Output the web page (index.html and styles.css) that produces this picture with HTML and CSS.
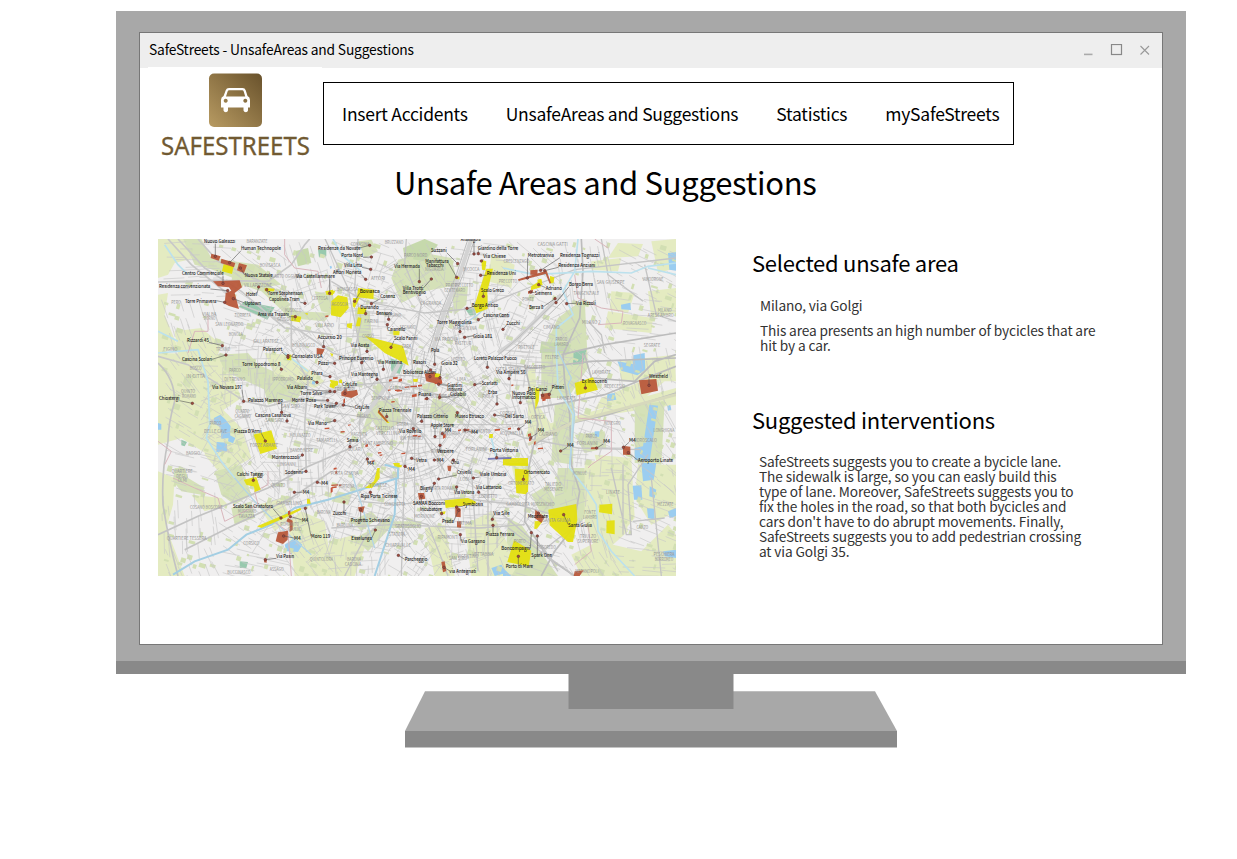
FILE: index.html
```html
<!DOCTYPE html>
<html lang="en">
<head>
<meta charset="utf-8">
<title>SafeStreets - UnsafeAreas and Suggestions</title>
<link rel="stylesheet" href="styles.css">
</head>
<body>
<div class="monitor">
  <div class="window">
    <div class="titlebar">
      <span class="window-title"><span>SafeStreets - UnsafeAreas and Suggestions</span></span>
      <svg class="controls" width="66" height="12" viewBox="0 0 66 12">
        <path d="M0 10.400H8.500" stroke="#aaa" stroke-width="1.6"/>
        <rect x="27.500" y=".5" width="10" height="10" fill="none" stroke="#888" stroke-width="1.2"/>
        <path d="M56.500 2l8.500 8.500M65 2l-8.500 8.500" stroke="#999" stroke-width="1.1"/>
      </svg>
    </div>
    <header class="header">
      <svg class="logo" width="174" height="97" viewBox="148 67 174 97">
        <defs><linearGradient id="gold" x1="0" y1="1" x2="1" y2="0"><stop offset="0" stop-color="#b89b62"/><stop offset="1" stop-color="#69522c"/></linearGradient></defs>
        <rect x="209" y="73.500" width="53" height="53.500" rx="5" fill="url(#gold)"/>
        <path fill="#fff" fill-rule="evenodd" d="M229 88H242.500Q245 88 245.700 90.200L247.500 96Q250 97 250 100V107.500H248V110.500Q247.600 112.300 245.800 112.300T243.500 110.500V107.500H228V110.500Q227.600 112.300 225.800 112.300T223.500 110.500V107.500H221V100Q221 97 223.600 96L225.700 90.200Q226.500 88 229 88ZM229.200 90.200Q228 90.200 227.600 91.500L226 96.500H245.200L243.700 91.500Q243.300 90.200 242.200 90.200ZM225.700 98.800a2 2 0 1 0 .01 0ZM245.300 98.800a2 2 0 1 0 .01 0Z"/>
        <text class="brand" x="161" y="155.300" textLength="149" lengthAdjust="spacingAndGlyphs">SAFESTREETS</text>
      </svg>
      <nav class="nav">
        <a>Insert Accidents</a><a>UnsafeAreas and Suggestions</a><a>Statistics</a><a>mySafeStreets</a>
      </nav>
    </header>
    <h1 class="page-title"><span>Unsafe Areas and Suggestions</span></h1>
    <main class="main">
      <svg class="map" id="map" width="518" height="337" viewBox="0 3 1554 1011"></svg>
      <section class="details">
        <h2 class="heading">Selected unsafe area</h2>
        <p class="place">Milano, via Golgi</p>
        <p class="reason">This area presents an high number of bycicles that are<br>hit by a car.</p>
        <h2 class="heading second">Suggested interventions</h2>
        <p class="advice">SafeStreets suggests you to create a bycicle lane.<br>The sidewalk is large, so you can easly build this<br>type of lane. Moreover, SafeStreets suggests you to<br>fix the holes in the road, so that both bycicles and<br>cars don't have to do abrupt movements. Finally,<br>SafeStreets suggests you to add pedestrian crossing<br>at via Golgi 35.</p>
      </section>
    </main>
  </div>
</div>
<svg class="stand" width="492" height="74" viewBox="0 0 492 74">
  <path d="M20 17.300H470L492 57H0Z" fill="#a8a8a8"/>
  <path d="M0 57H492V73.500H0ZM163.500 0H328.500V35H163.500Z" fill="#898989"/>
</svg>
<script src="map.js"></script>
</body>
</html>
```
FILE: styles.css
```css
body {
  margin: 0;
  background: #fff;
  color: #000;
  font-family: "Noto Sans CJK SC", "Noto Sans", sans-serif;
  overflow: hidden;
}
.monitor {
  box-sizing: border-box;
  width: 1070px;
  height: 663px;
  margin: 11px 0 0 116px;
  padding: 21px 23px 0;
  background: #a8a8a8;
  border-bottom: 13px solid #898989;
}
.window {
  box-sizing: border-box;
  height: 613px;
  border: 1px solid #777;
  background: #fff;
}
.titlebar {
  display: flex;
  align-items: center;
  justify-content: space-between;
  height: 35px;
  padding: 0 12px 0 9px;
  background: #eee;
}
.controls { margin-bottom: 2px; }
.window-title { font-size: 13.800px; letter-spacing: -.18px; line-height: 33px; height: 35px; }
.header { display: flex; height: 92px; padding-left: 8px; }
.logo { margin-top: -1px; background: #fff; flex: none; }
.brand { font-family: "Noto Sans", sans-serif; font-size: 24.500px; fill: #715a32; stroke: #715a32; stroke-width: .3px; }
.nav {
  box-sizing: border-box;
  display: flex;
  gap: 38px;
  width: 691px;
  height: 63px;
  margin: 14px 0 0 1px;
  padding-left: 18px;
  border: 1.300px solid #000;
  font-size: 17.500px;
  letter-spacing: -.25px;
  line-height: 61px;
  white-space: nowrap;
}
.page-title { margin: 0; padding: 2px 0 0 254px; font-size: 31px; letter-spacing: -.3px; font-weight: 400; line-height: 40px; }
.main { display: flex; margin: 37px 0 0 18px; }
.map { flex: none; background: #f0efef; font-family: "Noto Sans CJK SC", "Noto Sans", sans-serif; }
.details { margin-left: 76px; padding-top: 8px; white-space: nowrap; color: #333; font-size: 13.700px; letter-spacing: -.13px; line-height: 15px; }
.heading { margin: 0; color: #000; font-size: 22px; letter-spacing: -.26px; font-weight: 400; line-height: 30px; }
.place { margin: 21px 0 0 8px; }
.reason { margin: 10px 0 0 8px; }
.second { margin-top: 51px; }
.advice { margin: 20px 0 0 7px; }
.stand { display: block; margin-left: 405px; }
.district { fill: #949494; font-size: 14.500px; }
.place-name { fill: #222; stroke: #222; stroke-width: .25px; font-size: 16px; }
```
FILE: map.js
```js
const map = document.getElementById('map');
const NS = 'http://www.w3.org/2000/svg';

function add(parent, tag, attrs, text) {
  const el = document.createElementNS(NS, tag);
  for (const k in attrs) el.setAttribute(k, attrs[k]);
  if (text) el.textContent = text;
  parent.appendChild(el);
  return el;
}

// Land cover: pale fields, parks, woods and water.
const FIELD = '#e4ebc1', PARK = '#d5e1b8', WOOD = '#c6d9ac', TEAL = '#98c9ae', WATER = '#9bcdf0';
const land = [
  [FIELD, '0,3 75,3 110,60 50,75 30,110 0,120'], [PARK, '75,3 130,3 160,60 300,80 370,140 300,150 150,90 110,80'],
  [FIELD, '0,170 30,165 20,230 60,330 0,345'], [FIELD, '50,280 130,270 190,320 170,380 60,350'],
  [FIELD, '0,345 200,350 250,480 160,540 150,650 70,600 0,620'], [FIELD, '105,420 150,430 140,480 90,470'],
  [PARK, '180,350 270,345 300,380 440,440 410,500 310,450 200,400'], [FIELD, '320,345 390,350 500,430 470,450 350,410'],
  [PARK, '80,415 105,420 95,450 75,440'], [PARK, '145,510 210,530 250,600 230,650 150,655'],
  [FIELD, '0,700 50,720 45,800 25,870 80,1014 0,1014'],
  [FIELD, '150,530 180,500 250,570 280,660 190,710 140,650'], [PARK, '310,420 390,440 380,480 330,500'],
  [PARK, '230,80 330,140 400,200 375,220 310,160 220,130'], [PARK, '350,190 420,220 520,225 500,250 390,240'],
  [PARK, '470,160 525,170 535,230 490,220'], [WOOD, '410,40 450,30 460,75 420,85'],
  [PARK, '720,65 800,45 880,60 900,140 800,160 730,195 700,120'], [WOOD, '735,30 800,3 840,20 800,70 740,60'],
  [PARK, '880,150 930,145 925,200 890,230'], [PARK, '600,10 640,5 660,40 620,60'],
  [PARK, '590,210 635,220 645,340 600,320'], [FIELD, '1000,50 1070,80 1060,150 990,130'],
  [FIELD, '1380,15 1455,18 1440,55 1350,60'], [FIELD, '1300,70 1390,60 1380,100 1300,95'],
  [FIELD, '1360,160 1430,165 1410,225 1355,215'], [FIELD, '1470,160 1554,150 1554,225 1480,240'],
  [FIELD, '1350,220 1485,240 1480,285 1340,270'], [FIELD, '1480,10 1554,3 1554,90 1500,105'],
  [PARK, '1200,240 1280,180 1290,390 1230,480 1150,480 1150,350'], [WOOD, '1150,310 1240,320 1230,345 1145,345'],
  [FIELD, '1380,370 1550,350 1554,430 1390,430'], [FIELD, '1130,570 1250,535 1554,450 1554,500 1280,540 1130,615'],
  [FIELD, '1110,400 1130,380 1140,500 1180,560 1110,600'], [PARK, '1190,500 1250,490 1245,680 1180,670'],
  [PARK, '1250,590 1340,580 1345,630 1280,645'], [FIELD, '1330,480 1450,430 1520,430 1460,480 1310,515'],
  [PARK, '1430,500 1520,490 1510,680 1430,675'], [FIELD, '1310,650 1420,660 1430,840 1380,900 1340,770'],
  [FIELD, '1440,680 1554,680 1554,820 1480,860 1430,780'], [PARK, '1200,690 1280,690 1290,830 1230,890 1180,860'],
  [FIELD, '1280,670 1370,670 1410,880 1320,960 1280,850'], [FIELD, '1320,910 1450,940 1530,860 1554,890 1554,1014 1270,1014 1240,950'],
  [PARK, '1050,840 1090,860 1200,1014 1040,1014'], [FIELD, '920,860 1000,820 1080,980 1060,1014 940,1014'],
  [PARK, '660,490 720,480 730,550 670,590 640,540'], [PARK, '825,480 880,500 910,530 880,560 810,540'],
  [PARK, '610,590 660,430 680,450 630,580'], [PARK, '790,440 830,430 840,460 800,470'],
  [FIELD, '390,850 430,820 500,850 525,1014 410,1014'], [FIELD, '515,910 590,890 620,930 590,1014 500,1014'],
  [PARK, '590,900 650,870 700,830 710,855 630,940'], [FIELD, '300,800 370,780 400,840 350,880'],
  [PARK, '50,690 80,690 90,720 140,750 130,770 70,760 45,730'], [PARK, '170,700 250,680 280,770 230,800 190,770'],
  [PARK, '220,810 280,790 290,840 230,860'], [FIELD, '100,770 190,780 210,800 140,820'],
  [PARK, '580,850 640,820 660,840 610,880'], [PARK, '690,850 790,850 790,870 690,870'],
  [FIELD, '800,870 860,860 890,1014 830,1014'], [PARK, '540,760 580,770 570,800 520,790'],
  [FIELD, '1060,680 1110,670 1120,720 1080,770'], [PARK, '1120,770 1170,740 1210,820 1150,830'],
  [TEAL, '260,190 350,208 328,245 242,206'], [TEAL, '697,360 737,376 725,408 700,400'], [TEAL, '922,214 950,206 954,230 936,233'],
  [TEAL, '1247,340 1285,336 1276,378 1245,380'], [TEAL, '480,35 505,35 505,55 483,58'], [TEAL, '70,605 87,612 80,625 70,622'],
  [TEAL, '245,970 270,972 265,990 245,990'],
  [WATER, '168,540 187,530 203,545 218,565 216,600 190,602 187,568 167,555'], [WATER, '176,612 207,614 207,640 175,642'],
  [WATER, '213,590 232,600 225,616 210,610'], [WATER, '380,920 410,900 433,920 420,942 385,940'],
  [WATER, '0,555 10,558 10,575 0,575'], [WATER, '1389,200 1417,194 1419,216 1390,214'],
  [WATER, '1378,370 1425,378 1426,352 1460,345 1462,395 1438,412 1390,398'], [WATER, '1348,468 1370,465 1375,485 1347,490'],
  [WATER, '1474,500 1500,503 1475,670 1430,665 1430,630 1455,625'], [WATER, '1450,675 1495,675 1487,725 1455,730'],
  [WATER, '1424,743 1450,742 1453,785 1428,785'], [WATER, '1475,745 1495,755 1490,780 1474,775'],
  [WATER, '1467,810 1488,812 1490,845 1470,840'], [WATER, '1530,45 1554,43 1554,98 1534,95'],
  [WATER, '1530,820 1554,810 1554,835 1535,840'], [WATER, '1000,990 1030,980 1045,1005 1010,1014'],
  [WATER, '1515,940 1554,935 1554,960 1520,955'], [WATER, '1310,580 1325,580 1323,597 1310,595'],
  [WATER, '1035,990 1060,1014 1035,1014'], [WATER, '1528,505 1537,500 1540,515 1530,518'],
  [WATER, '515,85 520,83 522,90 517,93'], [WATER, '462,430 472,430 470,440 462,438']
];
const landLayer = add(map, 'g', {});
land.forEach(([fill, points]) => add(landLayer, 'polygon', { fill, points }));

// Side streets: short, locally aligned segments, denser towards the centre.
let seed = 7;
const rnd = () => (seed = (seed * 16807) % 2147483647) / 2147483647;
let thin = '', green = '';
for (let gy = 10; gy < 1014; gy += 34) {
  for (let gx = 10; gx < 1554; gx += 34) {
    const d = Math.hypot((gx - 740) / 620, (gy - 510) / 480);
    const n = d < .45 ? 4 : d < .8 ? 3 : d < 1 ? 2 : 1;
    const bx = Math.floor(gx / 170), by = Math.floor(gy / 150);
    const base = ((bx * 37 + by * 71) % 90) * Math.PI / 180;
    for (let i = 0; i < n; i++) {
      const a = base + (i % 2 ? Math.PI / 2 : 0) + (rnd() - .5) * .15;
      const l = 20 + rnd() * 50;
      const x = gx + rnd() * 30, y = gy + rnd() * 30;
      thin += `M${x.toFixed(1)} ${y.toFixed(1)}l${(Math.cos(a) * l).toFixed(1)} ${(Math.sin(a) * l).toFixed(1)}`;
    }
    if (rnd() < .4) {
      const x = gx + rnd() * 30, y = gy + rnd() * 30, w = 6 + rnd() * 14, h = 5 + rnd() * 12;
      green += `M${x.toFixed(1)} ${y.toFixed(1)}l${w.toFixed(1)} ${(w * .3).toFixed(1)}l${(-h * .3).toFixed(1)} ${h.toFixed(1)}l${(-w).toFixed(1)} ${(-w * .3).toFixed(1)}z`;
    }
  }
}
add(map, 'path', { d: green, fill: '#d2dfb3' });
add(map, 'path', { d: thin, stroke: '#c8c8c8', 'stroke-width': 1.9, fill: 'none' });

// Main roads, railways, canals and the municipal boundary.
const lines = [
  ['#c8c8c8', 5, 'M0 132L170 127 330 130 400 80 440 20 455 3M30 3L100 80 250 200 390 255 525 345 600 370M0 355L90 380 260 490 330 505 430 480 525 495M120 3L180 70 330 140 400 190 400 330 450 430 440 560 445 700M60 3L140 90 250 160 380 270 520 290'],
  ['#c3c3c3', 5, 'M0 375Q50 420 50 490Q30 560 30 610Q10 700 15 800Q30 900 60 1014M0 890L120 835 330 750 440 690 600 620M80 935L210 870 400 780 520 700'],
  ['#d3d3d3', 12, 'M940 3L905 110 860 220 820 345M1210 170L1070 310 1020 345M600 560L690 440 740 345'],
  ['#bdbdbd', 3, 'M930 3L895 110 850 220 810 345M950 3L915 110 870 220 830 345M1220 165L1080 300 1010 360M1235 170L1090 310 1020 370'],
  ['#c5c5c5', 4, 'M500 0L570 150 600 300 620 440 700 500 780 570 860 700M600 3L590 150 610 250 570 420M520 130L620 190 800 225 960 210 1110 150 1250 95 1554 60M745 3L740 80 790 200 760 345 770 500 740 680 730 1014M500 470L600 440 720 430 870 480 1000 560 1100 600 1260 630 1450 635M560 1014L620 900 690 830 810 860 850 960 870 1014M520 870L700 860 960 870 1100 860M600 790L720 800 900 780 1080 800 1220 840'],
  ['#bcbcbc', 5, 'M1270 3L1275 100 1265 240 1215 350 1220 430 1235 530 1240 680 1265 760 1245 870 1190 940 1150 1014M1130 620L1220 560 1350 530 1554 465M1100 380L1140 560 1110 700 1100 850 1170 960 1250 1014M1130 510L1240 490 1340 470 1440 430 1554 385M1280 350L1300 420 1430 430 1490 370 1554 350M1035 380L1130 390 1300 370 1554 360M1210 350L1340 320 1554 285'],
  ['#d7d9bd', 9, 'M1110 620L1250 550 1554 470'],
  ['#c4c4c4', 4, 'M1360 690L1405 890 1420 890 1410 740 1470 650M1395 680V890M1425 850L1520 840M1290 250L1330 290 1340 345M1330 3L1350 110 1455 190M1460 80L1495 230 1554 250M1480 720L1510 1014M1140 950L1190 910 1270 850M1150 920L1200 1000M1050 870L1250 1014M1035 830L1150 930M990 700L990 1014M940 690L960 1000'],
  ['#bbb', 2.500, 'M650 430Q750 390 860 440T920 590Q870 700 760 720T610 620Q590 500 650 430M690 480Q770 440 835 500T850 620Q780 670 710 630T690 480M770 560L500 520M770 560L560 820M770 560L770 850M770 560L1000 800M770 560L1080 560M770 560L1000 410M770 560L800 340M770 560L620 370'],
  ['#bce1ed', 5, 'M20 20L60 80 90 110M0 280L60 310M380 345L450 400M0 345L120 335 150 430 155 560 145 600 190 670 230 720M525 3L550 50 610 100M1035 90L1130 110 1300 100 1420 105 1470 85 1554 75M1260 3L1250 100 1215 160 1245 230 1195 270 1195 345 1200 450 1245 530 1240 620 1235 690 1290 760 1315 800 1320 880 1360 940 1430 1014M1470 90L1554 110M1015 660L1000 600'],
  ['#a3cee3', 6, 'M45 1010L110 970 210 935 265 890 340 860 410 810 510 785 640 745 720 720 720 690 680 680M715 720L710 830 650 1014'],
  ['#b4d4e4', 4, 'M230 720L290 790 370 870 460 950M1200 340L1240 420 1230 440 1250 530 1235 680M900 270L960 230 1000 190M580 700L650 930'],
  ['#d9b6bc', 3, 'M380 3V50L410 90 480 100 490 150M150 230V280H110L90 345M0 610L40 640 20 680M45 720L110 750 180 780 200 850 300 800 290 760 330 740 330 700M345 850L390 880 400 1014M1250 110L1260 180 1330 210 1395 220 1390 255 1320 260M1275 345L1260 540 1360 550 1360 640 1300 680 1290 690M1310 3L1350 30M1250 980L1300 940 1290 860']
];
lines.forEach(([stroke, w, d]) => add(map, 'path', { d, stroke, 'stroke-width': w, fill: 'none' }));

// Selected transformation areas.
const Y = '#e4df10', R = '#b8583b';
const zones = [
  [Y, '197,78 227,85 222,108 192,100'], [R, '160,47 188,55 182,68 158,60'], [R, '190,62 232,75 228,88 188,75'], [R, '243,75 267,82 258,105 237,97'],
  [R, '165,130 245,127 252,148 230,165 243,213 213,204 200,197 203,165 220,158 213,148 180,145'],
  [Y, '400,232 430,236 426,253 398,248'], [Y, '320,150 350,152 348,160 320,160'], [Y, '502,160 525,155 525,172 505,170'],
  [Y, '520,190 540,172 568,178 572,210 548,238 519,232'], [Y, '600,150 648,155 646,183 597,178'], [Y, '585,180 605,180 590,210 584,205'],
  [Y, '600,208 625,210 623,228 598,228'], [Y, '600,238 610,240 606,265 593,265'], [Y, '567,257 583,255 581,272 567,268'],
  [Y, '620,293 735,324 752,383 720,365 680,345'], [Y, '706,278 725,280 724,292 706,292'], [Y, '515,158 532,158 528,167 515,170'],
  [Y, '970,65 985,70 982,97 972,95'], [Y, '985,92 1005,92 988,160 989,212 955,226 948,206'], [Y, '893,116 904,116 904,124 892,123'],
  [Y, '1138,125 1150,122 1154,142 1140,140'], [Y, '1176,114 1189,118 1187,134 1176,136'],
  [Y, '1120,145 1150,125 1148,148 1118,157'], [R, '1117,97 1139,95 1138,111 1117,110'], [R, '1080,124 1160,100 1166,98 1179,135 1175,137 1163,108 1082,129'],
  [R, '1110,160 1125,155 1124,165 1110,167'],
  [Y, '287,590 340,577 357,632 307,648'], [Y, '516,435 525,440 530,452 515,447'], [Y, '515,425 540,430 540,440 525,450'],
  [R, '550,463 565,450 568,460 597,455 600,470 580,480 550,473'], [Y, '660,515 695,555 688,555 660,525'], [R, '662,517 690,550 687,553 659,523'],
  [R, '800,407 830,402 845,420 840,438 805,430'], [Y, '832,405 848,408 845,418 830,418'], [R, '840,423 850,422 853,435 845,440'],
  [Y, '765,423 780,422 778,432 766,431'], [Y, '994,588 1005,588 1004,600 993,600'], [Y, '1035,660 1110,660 1110,684 1035,682'],
  [Y, '1250,435 1305,418 1320,455 1256,472'], [R, '1443,427 1495,423 1500,458 1450,469'], [Y, '1130,450 1145,452 1142,490 1132,515 1132,480'],
  [R, '1148,468 1174,464 1178,482 1150,484'], [R, '1395,623 1417,626 1417,651 1395,650'], [R, '1300,628 1315,628 1315,634 1298,634'],
  [Y, '257,725 295,717 308,755 290,762 288,746 265,740'], [Y, '297,865 427,810 430,815 380,840 310,870'], [Y, '447,782 455,783 458,797 447,797'],
  [R, '360,883 390,878 389,905 375,918 353,910'], [R, '390,840 404,848 404,875 395,882 395,855 385,850'], [R, '319,963 326,963 326,974 318,973'],
  [Y, '658,690 665,690 665,720 642,750 620,750 648,730'], [Y, '860,787 930,780 955,792 950,799 863,810'], [R, '780,765 798,765 802,782 783,785'],
  [R, '892,805 908,812 908,838 892,836'], [R, '897,850 910,850 909,869 897,868'], [Y, '845,822 863,820 860,829 846,827'],
  [R, '600,808 620,805 615,824 603,820'], [R, '850,972 860,970 865,999 855,1003'], [R, '868,683 880,683 878,700 870,698'],
  [Y, '1070,692 1112,695 1110,760 1103,769 1075,765'], [Y, '1045,675 1110,675 1110,682 1045,682'],
  [Y, '1171,815 1255,798 1258,845 1245,912 1230,912 1175,862'], [Y, '1325,800 1363,797 1362,829 1323,823'], [Y, '1346,848 1370,847 1370,889 1345,885'],
  [Y, '1130,850 1155,848 1137,872 1129,873'], [R, '1132,815 1160,837 1150,855 1130,840'], [Y, '1068,907 1120,938 1112,985 1048,972'],
  [R, '1250,1000 1277,997 1265,1014 1247,1014'], [Y, '718,680 732,682 730,688 718,688'], [Y, '705,675 725,675 725,687 710,685'],
  [R, '476,330 500,334 492,350 476,348'], [Y, '388,350 400,350 400,367 387,366'], [Y, '440,225 450,226 448,232'],
  [Y, '516,345 526,348 522,357'], [Y, '544,425 552,425 552,436 542,434'], ['#7475af', '990,660 1060,657 1060,663 990,665']
];
zones.forEach(([fill, points]) => add(map, 'polygon', { fill, points, 'fill-opacity': .95 }));
let scraps = '';
[[705,418,14,6],[722,424,10,8],[693,425,8,6],[740,446,14,4],[757,444,20,4],[780,441,12,5],[716,457,16,4],[690,455,8,4],[762,470,14,8],[830,433,10,6],[842,470,5,16],[764,592,14,5],[780,594,8,4],[660,643,10,4],[665,650,8,4],[711,455,14,4],[622,620,8,8],[855,590,8,12],[920,574,14,6],[1010,574,16,5],[840,430,12,9],[1110,588,9,8],[1113,602,7,8],[1128,612,5,9],[1140,630,15,4],[1060,440,6,5],[1153,482,10,8],[502,233,9,5],[640,668,10,4],[518,750,6,16],[524,746,12,5],[390,820,7,12],[1050,570,9,5],[730,645,12,4],[800,480,8,6],[548,580,12,4],[556,485,5,13],[570,560,8,3],[500,570,14,4],[655,620,10,5],[700,490,10,4],[900,575,9,5],[520,740,20,4],[527,690,9,5],[532,700,5,9],[543,740,7,5]]
  .forEach(([x, y, w, h]) => { scraps += `M${x} ${y}l${w} ${-h * .3}v${h}l${-w} ${h * .3}z`; });
add(map, 'path', { d: scraps, fill: '#c4563c' });

// District names: text, centre x, baseline y.
const districts = `BARANZATE,297,14|BOVISASCA,336,87|QUARTO OGGIARO,382,119|VILLAPIZZONE,300,147|CERTOSA,485,187|MUSOCCO,405,222|PERO,54,198|VIALBA,154,234|DORNO,155,247|TORREFA,254,236|SAN LEONARDO,214,263|BONOLA,233,293|GALLARATESE,324,316|TRENNO,195,340|FIGINO,37,340|BOLDINASCO,437,328|GHISOLFA,386,250|VILLARIO,500,266|BOSCO,113,396|IN CITTÀ,113,420|PARCO,231,403|DI TRENNO,230,428|QUINTO,90,464|ROMANO,93,479|QUARTO,253,526|CAGNINO,254,540|IPPODROMO,375,430|SAN SIRO,398,510|PARCO,172,562|DELLE CAVE,173,585|FORZE ARMATE,318,628|MOLINAZZO,426,598|BAGGIO,105,651|BANDE NERE,430,642|TAMARELLI,506,612|SAN SIRO,350,552|QUARTIERE,72,705|DEGLI,72,719|OLMI,73,733|COSANO BOSCONE,145,812|QUARTIERE TESSERA,86,907|CORSICO,280,922|MUGGIANO,267,825|TAVAZZA,266,839|GIAMBELLINO,393,800|ROMANITO,395,865|GIULIO,410,880|QUINTO,361,746|BARONA,497,827|BUCCINASCO,243,1008|ASSAGO,356,998|QUINTOLORA,490,969|INGANNI,390,685|
COMASINA,606,24|BRUZZANO,708,17|PARCO NORD,773,57|NIGUARDA,829,98|BICOCCA,940,98|PRECOTTO,918,148|BOVISASCA,568,159|AGOSCIA,545,205|AFFORI,660,126|CA GRANDA,818,200|PRATO,880,147|CENTENARO,890,163|DERGANO,705,238|TURRO,1035,240|MAGGIOLINA,920,275|SEGNANO,750,272|PASTEUR,915,320|FARINI,640,255|VIA PADOVA,865,310|ZARA,745,330|CORSO,630,300|SEMPIONE,668,487|GARIBALDI,725,455|PAGANO,617,540|BRERA,733,563|CASTELLO,680,576|VIA TORINO,760,605|MAGENTA,602,595|VERCELLINA,690,592|AMENDOLA,535,506|BUENOS AIRES,860,480|PIOLA,990,480|LIMA,910,430|LORETO,900,370|RISORGIMENTO,955,585|TRE TORRI,560,460|CONCORDIA,875,590|SANT AMBROGIO,660,620|FORLANINI,955,640|ROMANA,840,645|SOLARI,590,640|PORTA ROMANA,855,755|LODI,920,730|TORTONA,565,750|TICINESE,660,748|PORTA GENOVA,560,710|MORIVIONE,800,840|CORVETTO,990,780|VIGENTINO,930,960|SAN SIRO,900,965|STADERA,717,895|CONCHETTA,710,805|CHIARAVALLE,720,928|BAROUNA,560,868|BARONA,588,970|CASCINA,585,985|RIPAMONTI,870,903|GRATOSOGLIO,750,870|FATIMA,920,860|VETTABBIA,975,955|
CASCINA GATTI,1184,25|CRESCENZAGO,1075,75|PRECOTTO,1050,135|PONTE,1110,190|SAN GIUSEPPE,1358,138|TANGENZIALE,1285,172|VIMODRONE,1485,128|MILANO 2,1300,258|ROVAGNASCO,1430,260|MILANO,1520,221|ARESE AMBRO,1508,237|SEGRATE,1482,326|CIMIANO,1180,274|ROTTOLE,1105,334|PARCO,1210,309|LAMBRO,1210,323|FELTRE,1182,362|CASORETTO,1130,393|LAMBRATE,1330,407|REDECESIO,1370,450|ORTICA,1140,542|CITTÀ STUDI,1050,400|ACQUABELLA,1060,590|CAVRIANO,1170,595|PARCO,1300,600|FORLANINI,1288,622|NOVEGRO,1363,562|IDROSCALO,1465,612|LONGHIGNA,1518,582|LAMBRATE,1225,485|CORSICA,1050,530|MONLUÈ,1265,712|ORTOMERCATO,1089,741|TALIEDO,1185,744|MECENATE,1187,758|MORSENCHIO,1154,804|SANTA GIULIA,1195,853|LINATE,1365,767|CANZO,1453,874|MEZZATE,1522,805|FONTE,1296,828|LAMBRO,1296,842|TRIULZO,1290,900|SUPERIORE,1290,914|ROGOREDO,1165,933|METANOPOLI,1287,1005|PESCHIERA,1518,955|BORROMEO,1518,969|GAMBOLOITA,1080,804|PORTO,1085,915`;
const districtLayer = add(map, 'g', { class: 'district', 'text-anchor': 'middle' });
districts.replace(/\n/g, '').split('|').forEach(row => {
  const [t, x, y] = row.split(',');
  add(districtLayer, 'text', { x, y, textLength: t.length * 7, lengthAdjust: 'spacingAndGlyphs' }, t);
});

// Place names per map sheet: text, left, baseline, width, marker x, marker y.
const sheets = [
  [0, 0, `Nuovo Galeazzi,138,15,94,172,55|Human Technopole,249,36,120,215,74|Centro Commerciale,72,111,125,195,136|Nuova Statale,260,117,84,247,90|Residenza convenzionata,3,151,154,209,158|Torre Primavera,81,194,94,200,193|Uptown,260,201,49,226,182|Hotel,264,173,33,302,147|Torre Stephenson,329,172,105,326,155|Capolinea Tram,333,190,92,441,196|Area via Trapani,300,234,93,412,236|Rizzardi 45,87,311,66,193,323|Palasport,315,340,57,390,358|Via Castellammare,414,119,117,515,166|Accursio 20,479,304,72,497,326`],
  [516, 0, `Residenze da Novate,-36,35,127,119,22|Porta Nord,34,56,65,124,57|Villa Litta,42,86,54,122,94|Affori Moneta,9,108,85,107,124|Boviasca,89,164,60,74,190|Cosenz,151,180,44,124,197|Durando,91,214,55,107,227|Bensoni,139,230,47,176,244|Caianello,172,278,54,172,260|Scalo Farini,192,306,70,183,328|Via Aosta,62,327,56,111,340|Via Hermada,193,90,77,268,131|Villa Trotti,218,156,62,304,123|Bentivoglio,218,167,70,0,0|Suzzani,303,42,47,383,77|Manifattura,286,74,70,380,118|Tabacchi,288,86,53,0,0|Anassagora,392,10,60,432,48|Giardino della Torre,443,35,122,445,47|Via Chiese,460,61,68,454,69|Residenza Uni,470,110,88,452,112|Scalo Greco,453,161,69,460,175|Borgo Antico,425,206,80,411,211|Cascina Conti,459,236,79,445,245|Torre Maggiolina,320,257,105,390,281|Gioia 181,429,299,58,404,298|Pola,303,341,25,314,379`],
  [1035, 0, `Metrotranvia,74,57,79,73,120|Residenza Tognazzi,171,57,118,113,97|Residenza Anziani,166,86,111,125,98|Adriano,128,155,49,107,140|Siemens,95,170,51,83,162|Borgo Berra,198,144,72,159,194|Berza 8,78,212,43,156,182|Via Rizzoli,219,202,59,191,197|Zucchi,10,260,41,0,274`],
  [0, 336, `Cascina Scolari,72,34,90,204,15|Chiostergi,3,150,61,103,160|Via Novara 197,163,117,89,257,154|Torre Ippodromo 8,252,49,115,370,58|Consolato USA,402,25,91,390,17|Palazzo Marengo,270,155,105,371,187|Cascina Casanova,291,201,108,387,213|Piazza D'Armi,228,248,82,322,273|Monterozzoli,341,328,84,433,315|Phara,460,75,34,516,80|Palalido,417,89,47,477,97|Via Albani,387,117,60,516,124|Torre Silva,427,136,65,530,125|Monte Rosa,401,156,73,509,151|Park Tower,468,175,65,535,160|Via Mario,450,224,57,530,212|Pozzi,480,44,32,530,40`],
  [516, 336, `Principe Eugenio,27,31,103,95,38|Via Messina,143,42,73,160,58|Via Mantegna,63,77,81,141,88|CityLife,37,108,44,45,130|CityLife,74,178,44,40,165|Piazza Triennale,146,187,98,170,200|Biblioteca Alberi,219,73,99,300,80|Rasori,249,43,39,302,60|Gioia 32,334,46,49,330,83|Giardini,352,112,45,326,103|Indivina,352,124,45,0,0|Pisana,265,138,38,291,146|Ciclabili,360,138,48,329,142|Palazzo Citterio,261,203,93,275,214|Museo Etrusco,375,204,87,382,188|Apple Store,302,232,70,315,260|Via Rovello,207,248,67,250,236|M4,344,247,20,337,251|M4,424,252,20,405,240|Verziere,321,308,50,330,286|M4,321,336,20,313,330|Vetra,258,336,32,245,325|Onù,363,341,24,370,330|Sesia,50,275,35,60,290|M4,112,344,20,112,327|Erba,474,133,28,501,162|Scarlatti,455,106,48,434,104|Loreto Palazzo Fuoco,432,31,128,472,52|Porta Vittoria,479,307,85,500,323`],
  [1035, 336, `Via Ampère 56,-20,71,87,18,86|Dei Canzi,75,123,58,119,136|Pitteri,146,117,38,139,133|Nuovo Polo,27,136,71,52,158|Informatico,27,147,71,0,0|Del Sarto,6,205,57,-25,195|M4,65,223,20,47,237|M4,104,247,20,83,263|M4,192,290,20,173,303|M4,301,280,20,281,294|M4,378,275,20,361,292|Ex Innocenti,236,98,77,247,114|Westfield,438,83,57,438,106|Aeroporto Linate,405,337,105,376,308`],
  [0, 675, `Calchi Taeggi,236,38,80,286,52|Scalo San Cristoforo,225,135,120,369,165|Soderini,381,33,53,444,25|M4,434,94,20,409,88|M4,490,67,20,478,58|M4,431,176,20,397,161|M4,408,231,20,377,219|Moro 119,459,226,58,442,136|Via Pasin,355,284,53,322,290`],
  [516, 675, `Ripa Porta Ticinese,92,104,111,121,88|Zucchi,8,157,41,42,117|Progetto Schievano,62,178,118,92,140|Esselunga,64,230,62,136,201|Parcheggio,224,295,68,205,277|via Antegnati,358,329,81,342,313|SANAA Bocconi,249,125,96,274,100|Incubatore,270,143,66,335,152|Bligny,270,80,38,313,61|Crivelli,381,34,43,326,48|Viale Umbria,449,40,80,430,45|Via Verona,373,92,60,380,72|Via Lattanzio,438,79,77,446,88|Symbiosis,398,128,61,380,132|Prada,336,180,35,386,142|Via Gargano,393,241,72,391,215|Piazza Ferrara,467,220,86,489,187|Via Sile,490,155,49,487,169|M4,235,24,20,225,10`],
  [1035, 675, `Ortomercato,62,34,79,61,49|Mecenate,74,165,61,106,150|Santa Giulia,196,191,71,182,155|Boncompagni,-5,262,87,85,209|Spark One,85,283,62,103,219|Porto di Mare,8,315,82,46,280`]
];
sheets.forEach(([ox, oy, rows]) => {
  const g = add(map, 'g', { transform: `translate(${ox} ${oy})` });
  rows.split('|').forEach(row => {
    const [t, x, y, w, mx, my] = row.split(',');
    if (+mx || +my) {
      const nx = Math.max(+x, Math.min(+x + +w, +mx));
      const ny = +my > +y ? +y + 2 : +y - 6;
      add(g, 'path', { d: `M${nx} ${ny}L${mx} ${my}`, stroke: '#555', 'stroke-width': 1.800 });
      add(g, 'circle', { cx: mx, cy: my, r: 3.900, fill: '#a04a3c', stroke: '#5a3434', 'stroke-width': 1.600 });
    }
    add(g, 'text', { class: 'place-name', x, y, textLength: w, lengthAdjust: 'spacingAndGlyphs' }, t);
  });
});
```
